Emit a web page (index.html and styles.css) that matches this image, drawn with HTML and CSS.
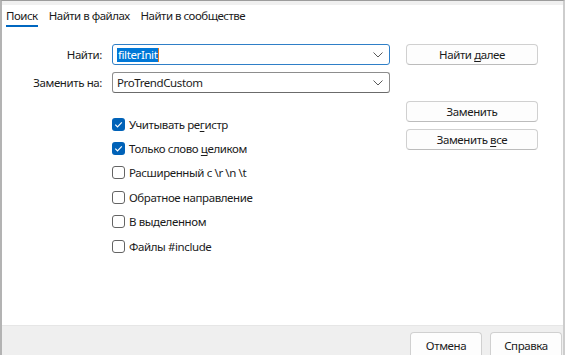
FILE: index.html
```html
<!DOCTYPE html>
<html lang="ru">
<head>
  <meta charset="UTF-8" />
  <title>Поиск и замена</title>
  <link rel="stylesheet" href="styles.css">
</head>
<body>
  <div class="window">
    <div class="top-strip"></div>

    <nav class="tabs">
      <div class="tab"><span class="active">Поиск</span></div>
      <div class="tab"><span>Найти в файлах</span></div>
      <div class="tab"><span>Найти в сообществе</span></div>
    </nav>

    <div class="form-grid">
      <label class="field-label">Найти:</label>
      <div class="combo focused">
        <span class="value"><span class="selected">filterInit</span><span class="caret"></span></span>
        <svg class="chevron" width="10" height="6" viewBox="0 0 10 6"><path d="M0.5 0.5 L5 5 L9.5 0.5" fill="none" stroke="#5a5a5a" stroke-width="1"/></svg>
      </div>
      <button class="btn">Найти <u>д</u>алее</button>

      <label class="field-label">Заменить на:</label>
      <div class="combo">
        <span class="value">ProTrendCustom</span>
        <svg class="chevron" width="10" height="6" viewBox="0 0 10 6"><path d="M0.5 0.5 L5 5 L9.5 0.5" fill="none" stroke="#5a5a5a" stroke-width="1"/></svg>
      </div>
      <div></div>
    </div>

    <div class="lower">
      <div></div>
      <div class="options">
        <div class="option">
          <span class="check checked"><svg width="13" height="13" viewBox="0 0 13 13"><path d="M3.3 6.6 L5.5 8.8 L9.8 4.4" fill="none" stroke="#fff" stroke-width="1.2"/></svg></span>
          <span>Учитывать ре<u>г</u>истр</span>
        </div>
        <div class="option">
          <span class="check checked"><svg width="13" height="13" viewBox="0 0 13 13"><path d="M3.3 6.6 L5.5 8.8 L9.8 4.4" fill="none" stroke="#fff" stroke-width="1.2"/></svg></span>
          <span>Только слово <u>ц</u>еликом</span>
        </div>
        <div class="option">
          <span class="check"></span>
          <span>Расширенный с \r \n \t</span>
        </div>
        <div class="option">
          <span class="check"></span>
          <span>Обратное направление</span>
        </div>
        <div class="option">
          <span class="check"></span>
          <span>В выделенном</span>
        </div>
        <div class="option">
          <span class="check"></span>
          <span>Файлы #include</span>
        </div>
      </div>
      <div class="side-buttons">
        <button class="btn">Заменить</button>
        <button class="btn">Заменить <u>в</u>се</button>
      </div>
    </div>

    <footer class="footer">
      <button class="btn btn-footer">Отмена</button>
      <button class="btn btn-footer">Справка</button>
    </footer>
  </div>
</body>
</html>
```

FILE: styles.css
```css
* {
  box-sizing: border-box;
}

body {
  margin: 0;
  background: #fff;
  font-family: "Noto Sans", "Open Sans", sans-serif;
  font-size: 11.5px;
  letter-spacing: -0.4px;
  color: #1b1b1b;
}

.window {
  width: 565px;
  height: 355px;
  display: flex;
  flex-direction: column;
  border-top: 1px solid #9c9c9c;
  border-left: 2px solid #b3b3b3;
  border-right: 2px solid #cdcdcd;
  overflow: hidden;
  background: #fff;
}

.top-strip {
  height: 4px;
  background: #f0f0f0;
}

/* tabs */
.tabs {
  display: flex;
  gap: 11px;
  padding: 3px 0 0 4px;
  height: 26px;
  letter-spacing: -0.5px;
}

.tab {
  line-height: 16px;
  white-space: nowrap;
}

.tab span {
  display: inline-block;
  padding-bottom: 1px;
}

.tab .active {
  border-bottom: 2px solid #0067c0;
}

/* find / replace fields */
.form-grid,
.lower {
  display: grid;
  grid-template-columns: 100px 284px 132px;
  column-gap: 10px;
}

.form-grid {
  margin-top: 13px;
  row-gap: 7px;
  grid-template-rows: 21px 21px;
}

.field-label {
  text-align: right;
  line-height: 21px;
}

.combo {
  position: relative;
  width: 278px;
  display: flex;
  align-items: center;
  border: 1px solid #8d8d8d;
  border-bottom-color: #6b6b6b;
  border-radius: 3px;
  padding-left: 4px;
  background: #fff;
}

.combo.focused {
  border-color: #2f7fc7;
}

.value {
  display: flex;
  align-items: center;
}

.selected {
  background: #0078d7;
  color: #fff;
  padding: 0 1px;
  line-height: 14px;
}

.caret {
  width: 1px;
  height: 14px;
  background: #e8791e;
}

.chevron {
  position: absolute;
  right: 6px;
  top: 7px;
}

.btn {
  font: inherit;
  letter-spacing: inherit;
  color: #1b1b1b;
  background: #fdfdfd;
  border: 1px solid #d0d0d0;
  border-bottom-color: #bcbcbc;
  border-radius: 4px;
  height: 21px;
  padding: 0;
}

.btn u,
.option u {
  text-underline-offset: 2px;
}

/* options and side buttons */
.lower {
  margin-top: 8px;
}

.options {
  display: flex;
  flex-direction: column;
  margin-top: 11px;
}

.option {
  display: flex;
  align-items: center;
  gap: 4px;
  height: 24.4px;
}

.check {
  width: 13px;
  height: 13px;
  border: 1px solid #646464;
  border-radius: 3px;
  background: #fff;
  flex-shrink: 0;
}

.check.checked {
  border: none;
  background: #0062b8;
}

.check svg {
  display: block;
}

.side-buttons {
  display: flex;
  flex-direction: column;
  gap: 7px;
}

/* footer */
.footer {
  margin-top: auto;
  height: 30px;
  background: #efefef;
  border-top: 1px solid #e6e6e6;
  display: flex;
  justify-content: flex-end;
  gap: 8px;
  padding: 6px 1px 0 0;
}

.btn-footer {
  width: 72px;
  height: 26px;
  flex-shrink: 0;
}
```
